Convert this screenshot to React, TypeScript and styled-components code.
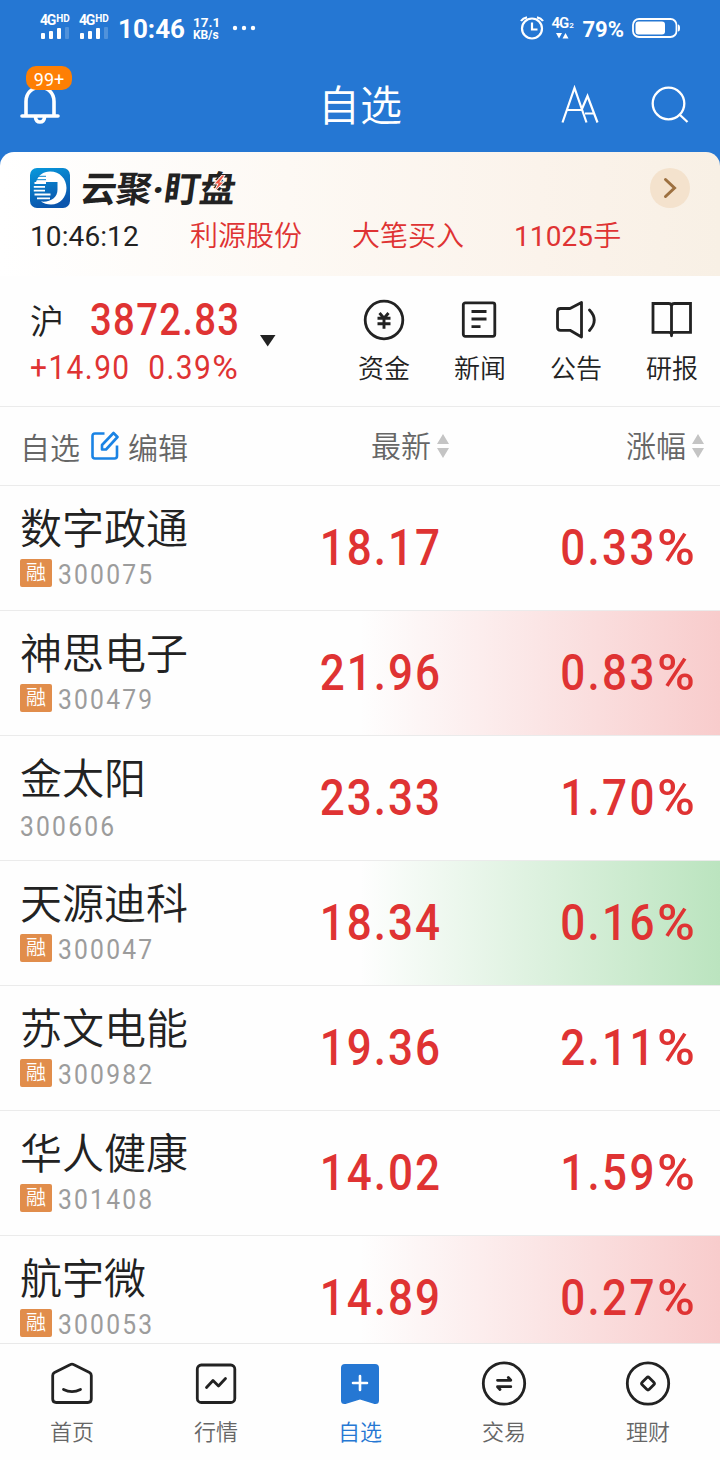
import React from 'react';
import styled, { createGlobalStyle } from 'styled-components';

const RED = '#df3333';
const BLUE = '#2577d3';
const INK = '#222222';

const GlobalStyle = createGlobalStyle`
  *, *::before, *::after { box-sizing: border-box; }
  body { margin: 0; background: #fff; }
  svg { display: block; flex: none; }
`;

const Screen = styled.div`
  width: 720px;
  height: 1460px;
  display: flex;
  flex-direction: column;
  overflow: hidden;
  background: #fefefe;
  color: ${INK};
  font-family: Roboto, 'Noto Sans CJK SC', sans-serif;
  font-weight: 350;
  white-space: nowrap;
`;

const Top = styled.header`
  background: ${BLUE};
  color: #fff;
  height: 152px;
  flex: none;
`;

const StatusBar = styled.div`
  height: 56px;
  display: flex;
  justify-content: space-between;
  padding: 0 40px;
`;

const StatusGroup = styled.div`
  display: flex;
  align-items: center;
  height: 56px;
`;

const Sim = styled.div`
  width: 39px;
  display: flex;
  flex-direction: column;
  gap: 1px;
  font-size: 14px;
  font-weight: 700;
  line-height: 12px;
  letter-spacing: -1.2px;
`;

const NetTag = styled.span`
  display: flex;
  align-items: flex-start;
  margin-top: -3px;
  sup { font-size: 10px; line-height: 9px; letter-spacing: 0; margin-left: 1px; }
`;

const Clock = styled.span`
  font-size: 26px;
  font-weight: 700;
  line-height: 30px;
  margin: 2px 0 0 0;
`;

const Speed = styled.span`
  display: flex;
  flex-direction: column;
  width: 27px;
  margin: 0 12px 0 8px;
  font-size: 13.5px;
  font-weight: 700;
  line-height: 13px;
  small { font-size: 12px; line-height: 12px; letter-spacing: -0.1px; }
`;

const Battery = styled.span`
  font-size: 22px;
  font-weight: 700;
  line-height: 28px;
  margin: 3px 8px 0 8px;
`;

const Data = styled.span`
  width: 23px;
  margin-left: 7px;
  font-size: 15px;
  font-weight: 600;
  line-height: 13px;
  letter-spacing: -1px;
  small { font-size: 8px; letter-spacing: 0; margin-left: 1px; }
`;

const TitleBar = styled.div`
  height: 96px;
  display: grid;
  grid-template-columns: 200px 1fr 200px;
  align-items: center;
`;

const Title = styled.h1`
  margin: 5px 0 0;
  font-size: 42px;
  font-weight: 350;
  line-height: 48px;
  text-align: center;
`;

const BellBox = styled.div`
  position: relative;
  width: 60px;
  height: 96px;
  padding: 28px 0 0 20px;
`;

const Badge = styled.span`
  position: absolute;
  left: 26px;
  top: 10px;
  width: 46px;
  height: 24px;
  border-radius: 10px;
  background: #fe7f04;
  font-size: 18px;
  line-height: 27px;
  text-align: center;
  font-weight: 400;
`;

const TitleActions = styled.div`
  display: flex;
  justify-content: space-between;
  padding: 1px 31px 0 41px;
`;

const BannerWrap = styled.section`
  background: ${BLUE};
  height: 124px;
  flex: none;
`;

const Banner = styled.div`
  height: 124px;
  border-radius: 14px 14px 0 0;
  padding: 16px 30px 0;
  background: linear-gradient(90deg, #ffffff 0%, #fdf9f4 40%, #fbf3eb 75%, #f8f0e5 100%);
`;

const BrandRow = styled.div`
  display: flex;
  align-items: center;
  height: 40px;
`;

const Brand = styled.span`
  position: relative;
  flex: 1;
  margin: 4px 0 0 11px;
  font-size: 36px;
  line-height: 40px;
  font-weight: 700;
  letter-spacing: -0.8px;
  transform: skewX(-8deg);
  display: flex;
  i { font-style: normal; width: 13px; text-align: center; font-weight: 900; }
`;

const Bolt = styled.svg`
  position: absolute;
  left: 130px;
  top: 5px;
`;

const Feed = styled.div`
  display: grid;
  grid-template-columns: 160px 162px 162px 1fr;
  font-size: 28px;
  line-height: 34px;
  margin-top: 12px;
  color: ${RED};
`;

const FeedTime = styled.span`
  color: ${INK};
`;

const Digits = styled.span`
  font-weight: 400;
  letter-spacing: 0.1px;
`;

const IndexBar = styled.section`
  height: 131px;
  flex: none;
  display: flex;
  border-bottom: 1px solid #ebebeb;
  padding-left: 30px;
`;

const IndexInfo = styled.div`
  width: 230px;
  padding-top: 20px;
`;

const IndexLine = styled.div<{ $h: number }>`
  display: flex;
  align-items: center;
  height: ${(p) => p.$h}px;
`;

const Market = styled.span`
  flex: none;
  font-size: 34px;
  line-height: 40px;
  width: 60px;
  padding-top: 2px;
`;

const Din = styled.span<{ $size: number; $track?: number; $color?: string; $right?: boolean; $weight?: number; $sx?: number }>`
  display: inline-block;
  font-family: Roboto, sans-serif;
  font-size: ${(p) => p.$size}px;
  line-height: 1.1;
  font-weight: ${(p) => p.$weight ?? 500};
  letter-spacing: ${(p) => p.$track ?? 0}px;
  color: ${(p) => p.$color ?? RED};
  transform: scaleX(${(p) => p.$sx ?? 0.88});
  transform-origin: ${(p) => (p.$right ? 'right' : 'left')} center;
`;

const Percent = styled.span`
  display: inline-block;
  letter-spacing: 0;
  margin: 0 0.12em 0 0;
  transform: scaleX(1.17);
  transform-origin: left center;
`;

const Caret = styled.svg`
  margin-top: 59px;
`;

const Shortcuts = styled.nav`
  margin-left: 60px;
  display: grid;
  grid-template-columns: repeat(4, 96px);
`;

const Shortcut = styled.div`
  display: flex;
  flex-direction: column;
  align-items: center;
  padding-top: 20px;
  font-size: 26px;
  line-height: 34px;
  svg { margin-bottom: 8px; }
`;

const Columns = styled.div`
  height: 79px;
  flex: none;
  display: grid;
  grid-template-columns: 250px 200px 1fr;
  align-items: center;
  border-bottom: 1px solid #ebebeb;
  color: #666;
  font-size: 30px;
  line-height: 40px;
`;

const EditGroup = styled.div`
  display: flex;
  align-items: center;
  padding: 5px 0 0 20px;
  svg { margin: -7px 9px 0 10px; }
`;

const SortLabel = styled.div<{ $pad?: number }>`
  display: flex;
  align-items: center;
  justify-content: flex-end;
  padding: 2px ${(p) => p.$pad ?? 0}px 0 0;
  gap: 5px;
  svg { margin-top: -2px; }
`;

const List = styled.main`
  flex: 1;
  min-height: 0;
  overflow: hidden;
`;

type Flash = 'up' | 'down' | undefined;

const flashColor = (f: Flash) =>
  f === 'up'
    ? 'linear-gradient(90deg, rgba(247,201,201,0) 50%, #f8cccc 100%)'
    : f === 'down'
      ? 'linear-gradient(90deg, rgba(184,227,188,0) 50%, #bbe4bf 100%)'
      : 'none';

const Row = styled.div<{ $flash?: Flash }>`
  height: 125px;
  border-bottom: 1px solid #ebebeb;
  display: grid;
  grid-template-columns: 242px 200px 252.5px;
  background: ${(p) => flashColor(p.$flash)};
`;

const StockCell = styled.div`
  padding: 19px 0 0 20px;
`;

const StockName = styled.div`
  font-size: 42px;
  line-height: 50px;
`;

const StockMeta = styled.div<{ $plain?: boolean }>`
  display: flex;
  align-items: center;
  height: 30px;
  margin-top: ${(p) => (p.$plain ? 7 : 5)}px;
`;

const MarginTag = styled.span`
  width: 32px;
  height: 28px;
  margin: -5px 6px 0 0;
  border-radius: 2px;
  background: #e18d4b;
  color: #fff;
  font-size: 20px;
  line-height: 29px;
  text-align: center;
`;

const NumCell = styled.div`
  text-align: right;
  padding-top: 35px;
`;

const TabBar = styled.nav`
  height: 117px;
  flex: none;
  border-top: 1px solid #e9e9e9;
  display: grid;
  grid-template-columns: repeat(5, 1fr);
  background: #fefefe;
`;

const Tab = styled.div<{ $active?: boolean }>`
  display: flex;
  flex-direction: column;
  align-items: center;
  padding-top: 15px;
  font-size: 22px;
  line-height: 30px;
  font-weight: 350;
  color: ${(p) => (p.$active ? BLUE : '#666')};
  svg { margin-bottom: 11px; }
`;

const SignalBars = () => (
  <svg width="30" height="13" viewBox="0 0 30 13" fill="#fff">
    <rect x="1" y="6" width="4" height="6" rx="1" />
    <rect x="9" y="4" width="4" height="8" rx="1" />
    <rect x="17" y="1" width="4" height="11" rx="1" />
    <rect x="25" y="0" width="4" height="12" rx="1" opacity=".2" />
  </svg>
);

const SimSignal = () => (
  <Sim>
    <NetTag>4G<sup>HD</sup></NetTag>
    <SignalBars />
  </Sim>
);

const SortArrows = () => (
  <svg width="14" height="26" viewBox="0 0 14 26" fill="#c4c4c4">
    <path d="M7 1 13 11H1zM7 25 1 15h12z" />
  </svg>
);

const strokeProps = {
  fill: 'none',
  stroke: INK,
  strokeWidth: 2.8,
  strokeLinecap: 'round' as const,
  strokeLinejoin: 'round' as const,
};

const FundIcon = () => (
  <svg width="48" height="48" viewBox="0 0 48 48" {...strokeProps}>
    <circle cx="24" cy="24" r="18.8" />
    <path strokeLinecap="butt" strokeWidth="2.9" d="M19.5 17 24 22.2 28.5 17M17.5 22.2h13M17.5 27.7h13M24 22v10.8" />
  </svg>
);
const NewsIcon = () => (
  <svg width="48" height="48" viewBox="0 0 48 48" {...strokeProps}>
    <rect x="7.3" y="6.8" width="31.5" height="33.5" rx="2" />
    <path strokeLinecap="butt" d="M15.5 15.5h15M15.5 23h15M15.5 30.7h9" />
  </svg>
);
const NoticeIcon = () => (
  <svg width="48" height="48" viewBox="0 0 48 48" {...strokeProps}>
    <path d="M5.5 15.5q0-3 3-3h9.5L29.5 6.5v34.5L18 34.3H8.5q-3 0-3-3zM37.5 14Q47 24 37.5 34.5" />
  </svg>
);
const ReportIcon = () => (
  <svg width="48" height="48" viewBox="0 0 48 48" {...strokeProps}>
    <path strokeLinejoin="miter" strokeLinecap="butt" d="M23.5 10Q23.5 7.5 20.5 7.5H5v28.8h16q2.5 0 2.5 2.5V10Q23.5 7.5 26.5 7.5h16v28.8H26q-2.5 0-2.5 2.5" />
    <path d="M23.5 38v1.8" />
  </svg>
);

const HomeIcon = () => (
  <svg width="48" height="48" viewBox="0 0 48 48" {...strokeProps}>
    <path d="M22.5 5.6q1.5-.8 3 0L41.5 13.5q1.8 1 1.8 3V40q0 3.5-3.5 3.5H8.2Q4.7 43.5 4.7 40V16.5q0-2 1.800-3z" />
    <path d="M15.5 30.5q8.500 4.300 17 0" />
  </svg>
);
const QuoteIcon = () => (
  <svg width="48" height="48" viewBox="0 0 48 48" {...strokeProps}>
    <rect x="5.3" y="6" width="37.5" height="37.5" rx="4" />
    <path d="M14.5 28.5 21 21.5l5.5 5.5 7-7.5" />
  </svg>
);
const WatchIcon = () => (
  <svg width="48" height="48" viewBox="0 0 48 48">
    <path fill={BLUE} d="M9 5h30q4 0 4 4V41.5q0 4-4.5 3.5L24 40.5 9.5 45Q5 45.5 5 41.5V9q0-4 4-4z" />
    <path stroke="#fff" strokeWidth="2.6" strokeLinecap="round" d="M17 24h14M24 17v14" />
  </svg>
);
const TradeIcon = () => (
  <svg width="48" height="48" viewBox="0 0 48 48" {...strokeProps}>
    <circle cx="24" cy="24.5" r="20.7" />
    <path d="M17.5 21.3h13.3l-2.5-2.8M30.800 27.700H17.500l2.500 2.800" />
  </svg>
);
const WealthIcon = () => (
  <svg width="48" height="48" viewBox="0 0 48 48" {...strokeProps}>
    <circle cx="24" cy="24.5" r="20.7" />
    <rect x="19" y="19.5" width="10" height="10" rx="1.8" transform="rotate(45 24 24.5)" />
  </svg>
);

const BrandLogo = () => (
  <svg width="40" height="40" viewBox="0 0 40 40">
    <defs>
      <linearGradient id="brand" x1="0" y1="0" x2="0.3" y2="1">
        <stop offset="0" stopColor="#0899dc" />
        <stop offset="1" stopColor="#0a55ad" />
      </linearGradient>
    </defs>
    <rect width="40" height="40" rx="7" fill="url(#brand)" />
    <path fill="#fff" d="M20 3.500C30 3.500 36.500 11 36.500 20S30 36.500 21 36.500c-4 0-7.500-1-10-3C20 34.500 27.500 30 27.500 21.500V14H6C8.500 7 13 3.500 20 3.500z" />
    <path stroke="#fff" strokeWidth="1.800" d="M4.500 15H16M3.800 18.800H15M3.800 22.600H15M4.500 26.500h16M7 30.300h13" />
    <path stroke="#0884cc" strokeWidth="1" d="M8 8.300h8M5 11.700h11" />
  </svg>
);

const stocks: { name: string; code: string; price: string; pct: string; margin: boolean; flash?: Flash }[] = [
  { name: '数字政通', code: '300075', price: '18.17', pct: '0.33', margin: true },
  { name: '神思电子', code: '300479', price: '21.96', pct: '0.83', margin: true, flash: 'up' },
  { name: '金太阳', code: '300606', price: '23.33', pct: '1.70', margin: false },
  { name: '天源迪科', code: '300047', price: '18.34', pct: '0.16', margin: true, flash: 'down' },
  { name: '苏文电能', code: '300982', price: '19.36', pct: '2.11', margin: true },
  { name: '华人健康', code: '301408', price: '14.02', pct: '1.59', margin: true },
  { name: '航宇微', code: '300053', price: '14.89', pct: '0.27', margin: true, flash: 'up' },
];

const shortcuts = [
  { label: '资金', Icon: FundIcon },
  { label: '新闻', Icon: NewsIcon },
  { label: '公告', Icon: NoticeIcon },
  { label: '研报', Icon: ReportIcon },
];

const tabs = [
  { label: '首页', Icon: HomeIcon },
  { label: '行情', Icon: QuoteIcon },
  { label: '自选', Icon: WatchIcon, active: true },
  { label: '交易', Icon: TradeIcon },
  { label: '理财', Icon: WealthIcon },
];

export default function App() {
  return (
    <Screen>
      <GlobalStyle />
      <Top>
        <StatusBar>
          <StatusGroup>
            <SimSignal />
            <SimSignal />
            <Clock>10:46</Clock>
            <Speed>17.1<small>KB/s</small></Speed>
            <svg width="24" height="6" viewBox="0 0 24 6" fill="#fff">
              <circle cx="3" cy="3" r="2.200" /><circle cx="12" cy="3" r="2.200" /><circle cx="21" cy="3" r="2.200" />
            </svg>
          </StatusGroup>
          <StatusGroup>
            <svg width="24" height="26" viewBox="0 0 24 26" fill="none" stroke="#fff" strokeWidth="2.2">
              <circle cx="12" cy="13.500" r="10" />
              <path d="M12 7.500v7h5.500" />
              <path d="M1 6Q3 3 7 2.300M23 6Q21 3 17 2.300" />
            </svg>
            <Data>
              4G<small>2</small>
              <svg width="20" height="8" viewBox="0 0 20 8" fill="#fff">
                <path d="M5 1h6L8 6.500zM11.500 6.500h6L14.500 1z" />
              </svg>
            </Data>
            <Battery>79%</Battery>
            <svg width="48" height="20" viewBox="0 0 48 20">
              <rect x="1" y="1" width="43.500" height="18" rx="6" fill="none" stroke="#fff" strokeWidth="1.800" />
              <rect x="3.500" y="3.500" width="29.500" height="13" rx="3" fill="#fff" />
              <path d="M46 6.500q2 0 2 3.500t-2 3.500z" fill="#fff" />
            </svg>
          </StatusGroup>
        </StatusBar>
        <TitleBar>
          <BellBox>
            <svg width="40" height="42" viewBox="0 0 40 42" fill="none" stroke="#fff" strokeWidth="3.600" strokeLinecap="round">
              <path d="M6 31V17.500C6 9 12 3.500 20 3.500S34 9 34 17.500V31M2 32h36M15.500 33.500Q16 38 20 38t4.500-4.500" />
            </svg>
            <Badge>99+</Badge>
          </BellBox>
          <Title>自选</Title>
          <TitleActions>
            <svg width="38" height="40" viewBox="0 0 38 40" fill="none" stroke="#fff" strokeWidth="2.200">
              <path d="M1.500 37.500 13.500 3 25.500 37.500M6 25h15.500M20.500 25 26.500 11 36.500 37.500M24 28.500h9" />
            </svg>
            <svg width="38" height="40" viewBox="0 0 38 40" fill="none" stroke="#fff" strokeWidth="2.300">
              <circle cx="17.500" cy="18.500" r="15.800" />
              <path d="M28.500 29.500 36.500 37" />
            </svg>
          </TitleActions>
        </TitleBar>
      </Top>

      <BannerWrap>
        <Banner>
          <BrandRow>
            <BrandLogo />
            <Brand>
              云聚<i>·</i>盯盘
              <Bolt width="14" height="18" viewBox="0 0 12 18" fill="#ee5544" stroke="#fdfaf6" strokeWidth="1"><path d="M8 0 1 9h4l-3 8 9-10H7l4-7z" /></Bolt>
            </Brand>
            <svg width="40" height="40" viewBox="0 0 40 40">
              <circle cx="20" cy="20" r="20" fill="#f4e2cd" />
              <path d="M15.500 11.500 24.500 20l-9 8.500" fill="none" stroke="#9d7040" strokeWidth="3" strokeLinecap="round" />
            </svg>
          </BrandRow>
          <Feed>
            <FeedTime><Digits>10:46:12</Digits></FeedTime>
            <span>利源股份</span>
            <span>大笔买入</span>
            <span><Digits>11025</Digits>手</span>
          </Feed>
        </Banner>
      </BannerWrap>

      <IndexBar>
        <IndexInfo>
          <IndexLine $h={50}>
            <Market>沪</Market>
            <Din $size={43.5} $track={1.5}>3872.83</Din>
          </IndexLine>
          <IndexLine $h={44}>
            <Din $size={34} $track={1.6} $weight={450}>+14.90&nbsp; 0.39<Percent>%</Percent></Din>
          </IndexLine>
        </IndexInfo>
        <Caret width="16" height="12" viewBox="0 0 16 12"><path fill={INK} d="M0 0h15.500L7.700 11.500z" /></Caret>
        <Shortcuts>
          {shortcuts.map(({ label, Icon }) => (
            <Shortcut key={label}><Icon />{label}</Shortcut>
          ))}
        </Shortcuts>
      </IndexBar>

      <Columns>
        <EditGroup>
          <span>自选</span>
          <svg width="29" height="30" viewBox="0 0 29 30" fill="none" stroke="#1a83e4" strokeWidth="2.600" strokeLinejoin="round">
            <path d="M14.500 3.500H5q-2.500 0-2.500 2.500v20q0 2.500 2.500 2.500h19.500q2.500 0 2.500-2.500V15.500" />
            <path d="M12 19.500v-4.500L23.500 3l4 4L16 19.500z" />
          </svg>
          <span>编辑</span>
        </EditGroup>
        <SortLabel>最新<SortArrows /></SortLabel>
        <SortLabel $pad={15}>涨幅<SortArrows /></SortLabel>
      </Columns>

      <List>
        {stocks.map((s) => (
          <Row key={s.code} $flash={s.flash}>
            <StockCell>
              <StockName>{s.name}</StockName>
              <StockMeta $plain={!s.margin}>
                {s.margin && <MarginTag>融</MarginTag>}
                <Din $size={28} $track={2.5} $color="#9c9c9c" $weight={450}>{s.code}</Din>
              </StockMeta>
            </StockCell>
            <NumCell><Din $size={50} $track={2.3} $right>{s.price}</Din></NumCell>
            <NumCell><Din $size={50} $track={2.6} $right>{s.pct}<Percent>%</Percent></Din></NumCell>
          </Row>
        ))}
      </List>

      <TabBar>
        {tabs.map(({ label, Icon, active }) => (
          <Tab key={label} $active={active}><Icon />{label}</Tab>
        ))}
      </TabBar>
    </Screen>
  );
}
